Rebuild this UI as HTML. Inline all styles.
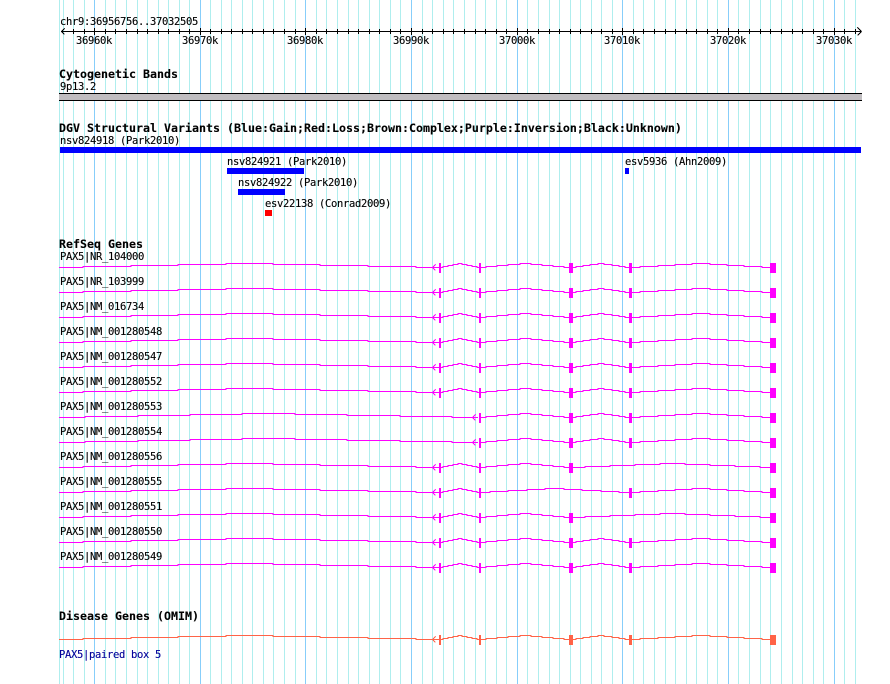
<!DOCTYPE html>
<html>
<head>
<meta charset="utf-8">
<title>PAX5</title>
<style>
html,body{margin:0;padding:0;background:#fff;width:890px;height:684px;overflow:hidden}
svg{display:block}
text{font-family:"DejaVu Sans Mono","Liberation Mono",monospace;font-size:10.5px;letter-spacing:-.32px;fill:#000;white-space:pre;stroke:#000;stroke-width:.12px}
text.b{font-size:11.63px;font-weight:bold;letter-spacing:0;stroke-width:.1px}
text.n{fill:#000099;stroke:#000099}
.c{shape-rendering:crispEdges;fill:none}
</style>
</head>
<body>
<svg width="890" height="684" viewBox="0 0 890 684" xmlns="http://www.w3.org/2000/svg">
<defs>
<path id="A" d="M59 .5H83V-.5H131V-1.5H178V-2.5H226V-3.5H273V-2.5H320V-1.5H368V-.5H416V.5H440"/>
<path id="B" d="M440 .5H443V-.5H448V-1.5H453V-2.5H458V-3.5H462V-2.5H467V-1.5H472V-.5H477V.5H480"/>
<path id="C" d="M480 .5H486V-.5H497V-1.5H508V-2.5H520V-3.5H531V-2.5H542V-1.5H553V-.5H564V.5H570"/>
<path id="D" d="M572 .5H576V-.5H583V-1.5H590V-2.5H598V-3.5H604V-2.5H612V-1.5H619V-.5H625V.5H630"/>
<path id="E" d="M631 .5H640V-.5H658V-1.5H675V-2.5H692V-3.5H710V-2.5H727V-1.5H744V-.5H762V.5H771"/>
<path id="F" d="M572 .5H585V-.5H610V-1.5H635V-2.5H660V-3.5H685V-2.5H710V-1.5H735V-.5H760V.5H771"/>
<path id="G" d="M480 .5H490V-.5H508V-1.5H527V-2.5H545V-3.5H564V-2.5H582V-1.5H601V-.5H619V.5H630"/>
<path id="H" d="M59 .5H85V-.5H138V-1.5H190V-2.5H242V-3.5H295V-2.5H347V-1.5H400V-.5H452V.5H478"/>
<path id="a1" d="M435.5 -2.5L432.5 .5L435.5 3.5"/>
<path id="a2" d="M475.5 -2.5L472.5 .5L475.5 3.5"/>
<g id="x1"><path d="M440 -4V6" stroke-width="2"/></g>
<g id="x2"><path d="M480 -4V6" stroke-width="2"/></g>
<g id="x3"><path d="M571 -4V6" stroke-width="4"/></g>
<g id="x4"><path d="M630.5 -4V6" stroke-width="3"/></g>
<g id="x5"><path d="M773 -4V6" stroke-width="6"/></g>
<g id="full">
<use href="#A"/><use href="#a1"/><use href="#x1"/><use href="#B"/><use href="#x2"/><use href="#C"/><use href="#x3"/><use href="#D"/><use href="#x4"/><use href="#E"/><use href="#x5"/>
</g>
<g id="noex1">
<use href="#H"/><use href="#a2"/><use href="#x2"/><use href="#C"/><use href="#x3"/><use href="#D"/><use href="#x4"/><use href="#E"/><use href="#x5"/>
</g>
<g id="no631">
<use href="#A"/><use href="#a1"/><use href="#x1"/><use href="#B"/><use href="#x2"/><use href="#C"/><use href="#x3"/><use href="#F"/><use href="#x5"/>
</g>
<g id="no571">
<use href="#A"/><use href="#a1"/><use href="#x1"/><use href="#B"/><use href="#x2"/><use href="#G"/><use href="#x4"/><use href="#E"/><use href="#x5"/>
</g>
</defs>

<!-- grid -->
<path class="c" stroke="#afeeee" stroke-width="1" d="M59.5 0V684M63.5 0V684M73.5 0V684M84.5 0V684M105.5 0V684M115.5 0V684M126.5 0V684M137.5 0V684M147.5 0V684M158.5 0V684M168.5 0V684M179.5 0V684M189.5 0V684M210.5 0V684M221.5 0V684M231.5 0V684M242.5 0V684M252.5 0V684M263.5 0V684M273.5 0V684M284.5 0V684M295.5 0V684M316.5 0V684M326.5 0V684M337.5 0V684M348.5 0V684M358.5 0V684M369.5 0V684M379.5 0V684M390.5 0V684M400.5 0V684M422.5 0V684M432.5 0V684M443.5 0V684M453.5 0V684M464.5 0V684M475.5 0V684M485.5 0V684M496.5 0V684M506.5 0V684M527.5 0V684M538.5 0V684M549.5 0V684M559.5 0V684M570.5 0V684M580.5 0V684M591.5 0V684M601.5 0V684M612.5 0V684M633.5 0V684M643.5 0V684M654.5 0V684M665.5 0V684M675.5 0V684M686.5 0V684M696.5 0V684M707.5 0V684M717.5 0V684M738.5 0V684M749.5 0V684M760.5 0V684M770.5 0V684M781.5 0V684M792.5 0V684M802.5 0V684M813.5 0V684M823.5 0V684M844.5 0V684M855.5 0V684"/>
<path class="c" stroke="#87cefa" stroke-width="1" d="M94.5 0V684M200.5 0V684M305.5 0V684M411.5 0V684M517.5 0V684M622.5 0V684M728.5 0V684M834.5 0V684"/>

<!-- ruler -->
<text x="60" y="25">chr9:36956756..37032505</text>
<path class="c" stroke="#000" stroke-width="1" d="M61 31.5H861M61.5 31.5L64.5 28.5M61.5 31.5L64.5 34.5M861.5 31.5L857.5 27.5M861.5 31.5L857.5 35.5"/>
<path class="c" stroke="#000" stroke-width="1" d="M73.5 29V34M84.5 29V34M94.5 28V35M105.5 29V34M115.5 29V34M126.5 29V34M137.5 29V34M147.5 29V34M158.5 29V34M168.5 29V34M179.5 29V34M189.5 29V34M200.5 28V35M210.5 29V34M221.5 29V34M231.5 29V34M242.5 29V34M252.5 29V34M263.5 29V34M273.5 29V34M284.5 29V34M295.5 29V34M305.5 28V35M316.5 29V34M326.5 29V34M337.5 29V34M348.5 29V34M358.5 29V34M369.5 29V34M379.5 29V34M390.5 29V34M400.5 29V34M411.5 28V35M422.5 29V34M432.5 29V34M443.5 29V34M453.5 29V34M464.5 29V34M475.5 29V34M485.5 29V34M496.5 29V34M506.5 29V34M517.5 28V35M527.5 29V34M538.5 29V34M549.5 29V34M559.5 29V34M570.5 29V34M580.5 29V34M591.5 29V34M601.5 29V34M612.5 29V34M622.5 28V35M633.5 29V34M643.5 29V34M654.5 29V34M665.5 29V34M675.5 29V34M686.5 29V34M696.5 29V34M707.5 29V34M717.5 29V34M728.5 28V35M738.5 29V34M749.5 29V34M760.5 29V34M770.5 29V34M781.5 29V34M792.5 29V34M802.5 29V34M813.5 29V34M823.5 29V34M834.5 28V35M844.5 29V34M855.5 29V34"/>
<text x="76" y="44">36960k</text>
<text x="182" y="44">36970k</text>
<text x="287" y="44">36980k</text>
<text x="393" y="44">36990k</text>
<text x="499" y="44">37000k</text>
<text x="604" y="44">37010k</text>
<text x="710" y="44">37020k</text>
<text x="816" y="44">37030k</text>

<!-- cytoband -->
<text class="b" x="59" y="78">Cytogenetic Bands</text>
<text x="60" y="90">9p13.2</text>
<rect x="59" y="93" width="803" height="8" fill="#000" shape-rendering="crispEdges"/>
<rect x="59" y="94" width="803" height="6" fill="#c0bdc0" shape-rendering="crispEdges"/>

<!-- DGV -->
<text class="b" x="59" y="132">DGV Structural Variants (Blue:Gain;Red:Loss;Brown:Complex;Purple:Inversion;Black:Unknown)</text>
<text x="60" y="144">nsv824918 (Park2010)</text>
<rect x="60" y="147" width="801" height="6" fill="#0000ff" shape-rendering="crispEdges"/>
<text x="227" y="165">nsv824921 (Park2010)</text>
<rect x="227" y="168" width="77" height="6" fill="#0000ff" shape-rendering="crispEdges"/>
<text x="238" y="186">nsv824922 (Park2010)</text>
<rect x="238" y="189" width="47" height="6" fill="#0000ff" shape-rendering="crispEdges"/>
<text x="265" y="207">esv22138 (Conrad2009)</text>
<rect x="265" y="210" width="7" height="6" fill="#ff0000" shape-rendering="crispEdges"/>
<text x="625" y="165">esv5936 (Ahn2009)</text>
<rect x="625" y="168" width="4" height="6" fill="#0000ff" shape-rendering="crispEdges"/>

<!-- RefSeq -->
<text class="b" x="59" y="248">RefSeq Genes</text>
<text x="60" y="260">PAX5|NR_104000</text>
<text x="60" y="285">PAX5|NR_103999</text>
<text x="60" y="310">PAX5|NM_016734</text>
<text x="60" y="335">PAX5|NM_001280548</text>
<text x="60" y="360">PAX5|NM_001280547</text>
<text x="60" y="385">PAX5|NM_001280552</text>
<text x="60" y="410">PAX5|NM_001280553</text>
<text x="60" y="435">PAX5|NM_001280554</text>
<text x="60" y="460">PAX5|NM_001280556</text>
<text x="60" y="485">PAX5|NM_001280555</text>
<text x="60" y="510">PAX5|NM_001280551</text>
<text x="60" y="535">PAX5|NM_001280550</text>
<text x="60" y="560">PAX5|NM_001280549</text>
<g class="c" stroke="#ff00ff" stroke-width="1" fill="none">
<use href="#full" y="267"/>
<use href="#full" y="292"/>
<use href="#full" y="317"/>
<use href="#full" y="342"/>
<use href="#full" y="367"/>
<use href="#full" y="392"/>
<use href="#noex1" y="417"/>
<use href="#noex1" y="442"/>
<use href="#no631" y="467"/>
<use href="#no571" y="492"/>
<use href="#no631" y="517"/>
<use href="#full" y="542"/>
<use href="#full" y="567"/>
</g>

<!-- OMIM -->
<text class="b" x="59" y="620">Disease Genes (OMIM)</text>
<g class="c" stroke="#ff6347" stroke-width="1" fill="none">
<use href="#full" y="639"/>
</g>
<text class="n" x="59" y="658">PAX5|paired box 5</text>
</svg>
</body>
</html>
